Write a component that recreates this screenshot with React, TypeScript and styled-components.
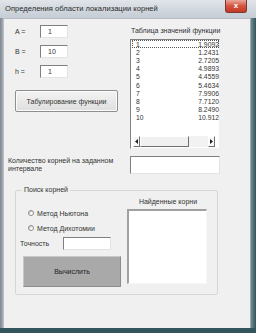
import React from "react";
import styled, { createGlobalStyle } from "styled-components";

const Global = createGlobalStyle`
  html, body { margin: 0; padding: 0; background: #ffffff; }
  body { font-family: "Liberation Sans", Arial, sans-serif; }
  * { box-sizing: border-box; }
`;

const Window = styled.div`
  width: 256px;
  height: 333px;
  display: flex;
  flex-direction: column;
  background: linear-gradient(90deg, #7d848c 0px, #a9afb6 3px, #c9ced4 4px, #c9ced4 250px, #6f8c92 251px, #33535a 256px);
  border-bottom: 5px solid #33555c;
  overflow: hidden;
`;

const TitleBar = styled.div`
  height: 18px;
  flex: none;
  display: flex;
  align-items: flex-start;
  justify-content: space-between;
  background: linear-gradient(180deg, #e1e5ea 0%, #d0d6dd 60%, #c5ccd4 100%);
  padding: 4px 9px 0 5px;
`;

const Title = styled.span`
  font-size: 7.6px;
  color: #2a2a2a;
  line-height: 10px;
`;

const CloseButton = styled.div`
  width: 22px;
  height: 13px;
  margin-top: -4px;
  border-radius: 0 0 3px 3px;
  background: linear-gradient(180deg, #e8a89a 0%, #d5533d 50%, #c23a25 100%);
  border: 1px solid #7e3a32;
  border-top: none;
  display: flex;
  align-items: center;
  justify-content: center;
  color: #ffffff;
  font-size: 8px;
  font-weight: bold;
  line-height: 1;
`;

const Client = styled.div`
  flex: 1;
  margin: 0 6px 0 4px;
  background: #f0f0f0;
  border-top: 1px solid #b9bec5;
  display: flex;
  flex-direction: column;
  padding: 6px 0 0 0;
  font-size: 7px;
  color: #333333;
`;

const TopSection = styled.div`
  display: flex;
  gap: 8px;
  padding-left: 11px;
`;

const LeftColumn = styled.div`
  width: 107px;
  display: flex;
  flex-direction: column;
  gap: 7px;
`;

const FieldRow = styled.div`
  display: flex;
  align-items: center;
  height: 13px;
`;

const FieldLabel = styled.span`
  width: 25px;
  font-size: 7px;
`;

const TextInput = styled.div<{ $w: number; $h?: number }>`
  width: ${(p) => p.$w}px;
  height: ${(p) => p.$h ?? 13}px;
  background: #ffffff;
  border-top: 1px solid #7f7f7f;
  border-left: 1px solid #7f7f7f;
  border-right: 1px solid #e3e3e3;
  border-bottom: 1px solid #e3e3e3;
  font-size: 7px;
  padding: 0 0 0 7px;
  display: flex;
  align-items: center;
`;

const PushButton = styled.div`
  margin-top: 5px;
  width: 103px;
  height: 22px;
  display: flex;
  align-items: center;
  justify-content: center;
  font-size: 7px;
  background: linear-gradient(180deg, #f4f4f4 0%, #e9e9e9 50%, #dedede 100%);
  border: 1px solid #8e8e8e;
  border-radius: 2px;
  box-shadow: inset 0 0 0 1px #fbfbfb;
`;

const RightColumn = styled.div`
  display: flex;
  flex-direction: column;
  gap: 4px;
`;

const ColumnCaption = styled.span`
  font-size: 7px;
  line-height: 9px;
  padding-left: 1px;
  margin-top: 1px;
`;

const ListBox = styled.div`
  width: 90px;
  height: 110px;
  background: #ffffff;
  border-top: 1px solid #828282;
  border-left: 1px solid #828282;
  border-right: 1px solid #f0f0f0;
  border-bottom: 1px solid #f0f0f0;
  display: flex;
  flex-direction: column;
  justify-content: space-between;
`;

const Rows = styled.div`
  padding: 0 0 0 1px;
  display: flex;
  flex-direction: column;
`;

const ListRow = styled.div<{ $focus?: boolean }>`
  height: 8.2px;
  display: flex;
  justify-content: space-between;
  align-items: center;
  font-size: 6.8px;
  padding: 0 0 0 4px;
  outline: ${(p) => (p.$focus ? "1px dotted #555" : "none")};
  outline-offset: -1px;
  color: #333333;
`;

const ScrollBar = styled.div`
  height: 11px;
  margin: 0 4px 1px 2px;
  display: flex;
  align-items: stretch;
  background: #f2f2f2;
`;

const ScrollArrow = styled.div`
  width: 7px;
  display: flex;
  align-items: center;
  justify-content: center;
  background: #f8f8f8;
  border: 1px solid #6f6f6f;
  border-top-color: #ffffff;
  border-left-color: #ffffff;
`;

const ScrollThumb = styled.div`
  width: 49px;
  background: #f0f0f0;
  border: 1px solid #6f6f6f;
  border-top-color: #ffffff;
  border-left-color: #ffffff;
`;

const Spacer = styled.div`
  flex: 1;
`;

const CountRow = styled.div`
  display: flex;
  margin-top: 7px;
  padding-left: 4px;
  gap: 4px;
`;

const CountLabel = styled.div`
  width: 118px;
  font-size: 7px;
  line-height: 8px;
  padding-top: 1px;
`;

const CountBox = styled.div`
  width: 90px;
  height: 18px;
  background: #ffffff;
  border-top: 1px solid #7f7f7f;
  border-left: 1px solid #7f7f7f;
  border-right: 1px solid #e3e3e3;
  border-bottom: 1px solid #e3e3e3;
`;

const GroupBox = styled.fieldset`
  margin: 12px 0 0 11px;
  width: 203px;
  height: 109px;
  border: 1px solid #d5d5d5;
  border-radius: 2px;
  padding: 0 0 0 0;
  display: flex;
`;

const Legend = styled.legend`
  font-size: 7px;
  padding: 0 2px;
  margin-left: 6px;
  line-height: 8px;
`;

const GroupLeft = styled.div`
  width: 111px;
  display: flex;
  flex-direction: column;
  padding: 14px 0 0 4px;
`;

const RadioRow = styled.div`
  display: flex;
  align-items: center;
  height: 10px;
  gap: 3px;
  padding-left: 8px;
  margin-bottom: 5px;
`;

const RadioCircle = styled.span`
  width: 6px;
  height: 6px;
  border-radius: 50%;
  background: #ffffff;
  border: 1px solid #8a8a8a;
  box-shadow: inset 1px 1px 0 #cfcfcf;
`;

const AccuracyRow = styled.div`
  display: flex;
  align-items: center;
  height: 13px;
  margin-top: -1px;
`;

const AccuracyLabel = styled.span`
  width: 43px;
  font-size: 7px;
`;

const CalcButton = styled.div`
  margin: 6px 0 0 3px;
  width: 98px;
  height: 31px;
  display: flex;
  align-items: center;
  justify-content: center;
  background: #a9a9a9;
  border: 1px solid #8c8c8c;
  border-top-color: #c8c8c8;
  border-left-color: #c8c8c8;
  font-size: 7px;
  color: #222;
`;

const GroupRight = styled.div`
  display: flex;
  flex-direction: column;
  align-items: center;
  padding-top: 3px;
`;

const RightCaption = styled.span`
  font-size: 7px;
  line-height: 9px;
  margin-bottom: 3px;
  padding-left: 2px;
`;

const RootsBox = styled.div`
  width: 80px;
  height: 75px;
  background: #ffffff;
  border-top: 2px solid #a0a0a0;
  border-left: 2px solid #a0a0a0;
  border-right: 1px solid #f6f6f6;
  border-bottom: 1px solid #f6f6f6;
`;

const values = ["1.9092", "1.2431", "2.7205", "4.9893", "4.4559", "5.4634", "7.9906", "7.7120", "8.2490", "10.912"];

const LeftTri = () => (
  <svg width="3" height="5" viewBox="0 0 3 5">
    <path d="M3 0 L0 2.5 L3 5 Z" fill="#222" />
  </svg>
);
const RightTri = () => (
  <svg width="3" height="5" viewBox="0 0 3 5">
    <path d="M0 0 L3 2.5 L0 5 Z" fill="#222" />
  </svg>
);

export default function App() {
  return (
    <>
      <Global />
      <Window>
        <TitleBar>
          <Title>Определения области локализации корней</Title>
          <CloseButton>x</CloseButton>
        </TitleBar>
        <Client>
          <TopSection>
            <LeftColumn>
              <FieldRow>
                <FieldLabel>A =</FieldLabel>
                <TextInput $w={28}>1</TextInput>
              </FieldRow>
              <FieldRow>
                <FieldLabel>B =</FieldLabel>
                <TextInput $w={28}>10</TextInput>
              </FieldRow>
              <FieldRow>
                <FieldLabel>h =</FieldLabel>
                <TextInput $w={28}>1</TextInput>
              </FieldRow>
              <PushButton>Табулирование функции</PushButton>
            </LeftColumn>
            <RightColumn>
              <ColumnCaption>Таблица значений функции</ColumnCaption>
              <ListBox>
                <Rows>
                  {values.map((v, i) => (
                    <ListRow key={i} $focus={i === 0}>
                      <span>{i + 1}</span>
                      <span>{v}</span>
                    </ListRow>
                  ))}
                </Rows>
                <ScrollBar>
                  <ScrollArrow>
                    <LeftTri />
                  </ScrollArrow>
                  <ScrollThumb />
                  <Spacer />
                  <ScrollArrow>
                    <RightTri />
                  </ScrollArrow>
                </ScrollBar>
              </ListBox>
            </RightColumn>
          </TopSection>
          <CountRow>
            <CountLabel>
              Количество корней на заданном
              <br />
              интервале
            </CountLabel>
            <CountBox />
          </CountRow>
          <GroupBox>
            <Legend>Поиск корней</Legend>
            <GroupLeft>
              <RadioRow>
                <RadioCircle />
                <span>Метод Ньютона</span>
              </RadioRow>
              <RadioRow>
                <RadioCircle />
                <span>Метод Дихотомии</span>
              </RadioRow>
              <AccuracyRow>
                <AccuracyLabel>Точность</AccuracyLabel>
                <TextInput $w={48} $h={13} />
              </AccuracyRow>
              <CalcButton>Вычислить</CalcButton>
            </GroupLeft>
            <GroupRight>
              <RightCaption>Найденные корни</RightCaption>
              <RootsBox />
            </GroupRight>
          </GroupBox>
        </Client>
      </Window>
    </>
  );
}
